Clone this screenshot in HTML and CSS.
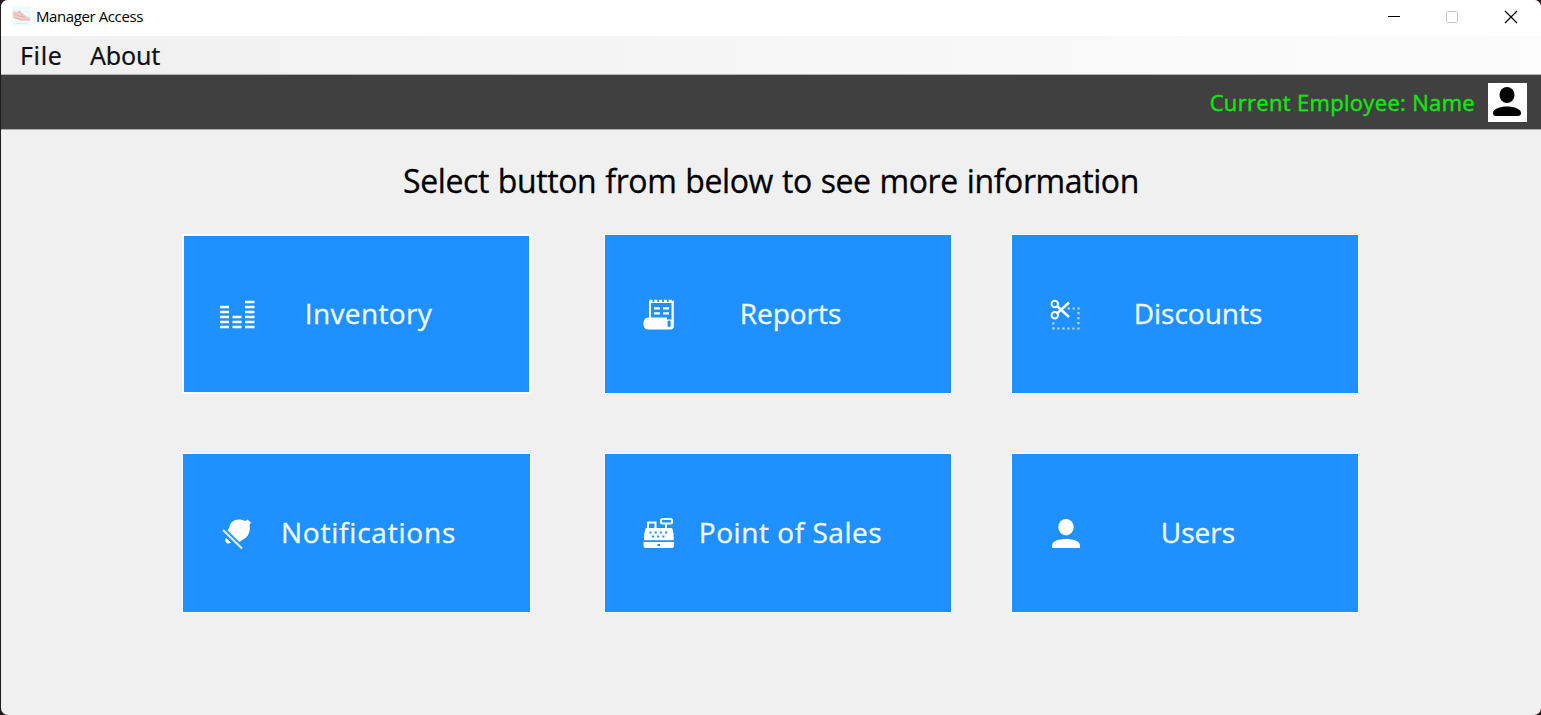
FILE: index.html
```html
<!DOCTYPE html>
<html lang="en">
<head>
<meta charset="utf-8">
<title>Manager Access</title>
<link rel="stylesheet" href="styles.css">
</head>
<body>
<div class="window">
  <header class="titlebar">
    <svg class="app-icon" width="19" height="20" viewBox="0 0 19 20"><path fill="#eefafc" d="M0 0h19v20H0z"/><path fill="#f3c9c4" d="M1 5l4 1 2-2 3 3 4 3 4 2v2H9l-8-2z"/><path stroke="#e3b1ab" fill="none" d="M2 8l5 2 6 1M3 12l6 2h9M7 5l4 4"/><path stroke="#d9edea" d="M4 17.500h12"/></svg>
    <span class="title">Manager Access</span>
    <svg class="controls" width="140" height="20" viewBox="0 0 140 20" fill="none"><path stroke="#000" d="M0 9.500h12"/><rect x="58.500" y="4.500" width="11" height="11" rx="1" stroke="#c4c4c4"/><path stroke="#000" stroke-width="1.200" d="M117 4l12 12M129 4l-12 12"/></svg>
  </header>
  <nav class="menu"><span class="file">File</span><span class="about">About</span></nav>
  <div class="userbar">
    <span class="employee">Current Employee: Name</span>
    <svg class="avatar" width="39" height="39" viewBox="0 0 39 39"><path fill="#fff" d="M0 0h39v39H0z"/><ellipse cx="19" cy="12" rx="7.500" ry="8"/><path d="M5 30c0-4 7-6.500 14-6.500S33 26 33 30q0 3-3 3H8q-3 0-3-3z"/></svg>
  </div>
  <main class="content">
    <h1 class="heading"><span>Select button from below to see more information</span></h1>
    <div class="grid">
      <button class="tile focused">
        <svg class="icon" viewBox="0 0 60 50"><path stroke="#fff" stroke-width="2.400" d="M10 17h9M10 22h9M10 27h9M10 32h9M10 37h9M22.500 27h9M22.500 32h9M22.500 37h9M35 12h9.500M35 17h9.500M35 22h9.500M35 27h9.500M35 32h9.500M35 37h9.500"/></svg>
        <span class="label inventory">Inventory</span>
      </button>
      <button class="tile middle">
        <svg class="icon" viewBox="0 0 60 50"><path fill="none" stroke="#fff" stroke-width="2" d="M15 29V11M37.500 11v25"/><path stroke="#fff" stroke-width="2.400" stroke-dasharray="3 1.800" d="M14.500 11H39"/><path stroke="#fff" d="M14 12.500h24.500"/><path stroke="#fff" stroke-width="2.200" d="M19 18.300h6M28 18.300h6M19 23.300h6M28 23.300h6"/><path fill="#fff" d="M13 27.500h19v9h5V12h1.500v24.500q0 3-3 3H13c-6 0-6-12 0-12z"/><path fill="#fff" d="M31 29.500h7.500V38H31z"/><rect x="32.500" y="30.500" width="3.200" height="6.500" rx="1.400" fill="#1e90ff"/></svg>
        <span class="label reports">Reports</span>
      </button>
      <button class="tile right">
        <svg class="icon" viewBox="0 0 60 50"><g fill="none" stroke="#fff" stroke-width="2"><circle cx="14.800" cy="14" r="3.200"/><circle cx="14.800" cy="25.300" r="3.200"/><path stroke-width="2.400" d="M17.500 16.500L29 27M17.500 23L29 12.500"/></g><path fill="none" stroke="#b5d9ff" stroke-width="2.200" stroke-dasharray="2.300 2.700" d="M27.500 18.500H40M13.300 32.300V39M12.300 38.500H40M38.500 22v15"/></svg>
        <span class="label discounts">Discounts</span>
      </button>
      <button class="tile">
        <svg class="icon" viewBox="0 0 60 50"><path fill="#fff" d="M17 21.500c3-2 2-5 4.500-8 3-3.500 9-4 14-1.500l2-1.500 3.500 3-1.500 2.500c1 5-.5 10-4 13-3 2-5 2.500-6.500 5z"/><path fill="#fff" d="M16 29l5 4.500c-2 2-5 1-5.500-1-.4-1.200-.2-2.500.5-3.500z"/><path stroke="#1e90ff" stroke-width="1.500" d="M14.500 19.500l17.500 17"/><path stroke="#d5e9ff" stroke-width="2.300" d="M13 21l19 18.500"/></svg>
        <span class="label notifications">Notifications</span>
      </button>
      <button class="tile middle">
        <svg class="icon" viewBox="0 0 60 50"><path fill="none" stroke="#fff" stroke-width="2" d="M13 21v-7.500h7.500V20M31 15v5"/><rect x="26" y="10" width="11" height="4.500" rx="1.500" fill="none" stroke="#fff" stroke-width="2"/><path fill="#fff" d="M11 19h26q1.700 3 1.700 12.200H9Q9 22 11 19zM8.500 33h30.500v3.500q0 2.500-2.500 2.500H11q-2.500 0-2.500-2.500z"/><path stroke="#1e90ff" stroke-width="2" stroke-dasharray="2 3.200" d="M14.500 23.500H34M17 27.500h14"/><path fill="#1e90ff" d="M22.500 35h2.500v2h-2.500z"/></svg>
        <span class="label sales">Point of Sales</span>
      </button>
      <button class="tile right">
        <svg class="icon" viewBox="0 0 60 50"><ellipse cx="26" cy="18.200" rx="7.700" ry="8.300" fill="#fff"/><path fill="#fff" d="M12 39v-2.500C12 32 19 30 26 30s14 2 14 6.500V39z"/></svg>
        <span class="label users">Users</span>
      </button>
    </div>
  </main>
</div>
</body>
</html>
```
FILE: styles.css
```css
* { box-sizing: border-box; }
body { margin: 0; background: #25191b; font-family: "Open Sans", sans-serif; }
.window { width: 1540px; height: 715px; margin-left: 1px; background: #f0f0f0; border-radius: 7px; overflow: hidden; }
.titlebar { height: 36px; background: #fff; display: flex; align-items: center; padding: 0 13px 4px 11px; }
.app-icon { margin-right: 5px; }
.title { font: 15px/20px "Open Sans", sans-serif; letter-spacing: -0.400px; color: #000; }
.controls { margin: 2px 0 0 auto; }
.menu { height: 39px; display: flex; align-items: center; padding-left: 19px; background: linear-gradient(90deg, #f0f0f0, #fcfcfc); border-bottom: 1px solid #b4b4b4; font: 25px/36px "Noto Sans", sans-serif; color: #111; -webkit-text-stroke: 0.200px #111; }
.file { width: 70px; letter-spacing: 0.600px; }
.about { letter-spacing: -0.200px; }
.userbar { height: 55px; background: #404040; border-bottom: 1px solid #aaa; display: flex; align-items: center; justify-content: flex-end; padding-right: 14px; gap: 13px; }
.employee { color: #11e811; font-size: 22px; line-height: 30px; letter-spacing: 0.320px; -webkit-text-stroke: 0.400px #11e811; }
.heading { margin: 0; padding-top: 28px; height: 105px; text-align: center; font-size: 32px; line-height: 46px; font-weight: 400; letter-spacing: -0.400px; word-spacing: 1px; color: #000; -webkit-text-stroke: 0.300px #000; }
.grid { display: grid; grid-template-columns: 421px 408px 347px; grid-template-rows: 158px 158px; row-gap: 61px; padding-left: 182px; }
.tile { width: 347px; height: 158px; margin: 0; padding: 0 63px 0 27px; border: 0; outline: 1px solid #f8fdff; background: #1e90ff; display: grid; grid-template-columns: 60px 197px; align-items: center; font-family: "Open Sans", sans-serif; }
.grid .middle { width: 346px; margin-left: 1px; padding-right: 62px; }
.middle .icon { margin-left: 3px; }
.grid .right { padding: 0 62px 0 28px; width: 346px; grid-template-columns: 60px 196px; }
.focused { box-shadow: inset 0 0 0 1px #f8fdff; outline-color: #fff; }
.icon { width: 60px; height: 50px; margin-top: 1px; }
.label { justify-self: center; padding-bottom: 2px; color: #eff7ff; font-size: 28px; line-height: 38px; white-space: nowrap; -webkit-text-stroke: 0.350px #eff7ff; }
.inventory { letter-spacing: 0.350px; }
.notifications { letter-spacing: 0.800px; }
.sales { letter-spacing: 0.550px; }
```
